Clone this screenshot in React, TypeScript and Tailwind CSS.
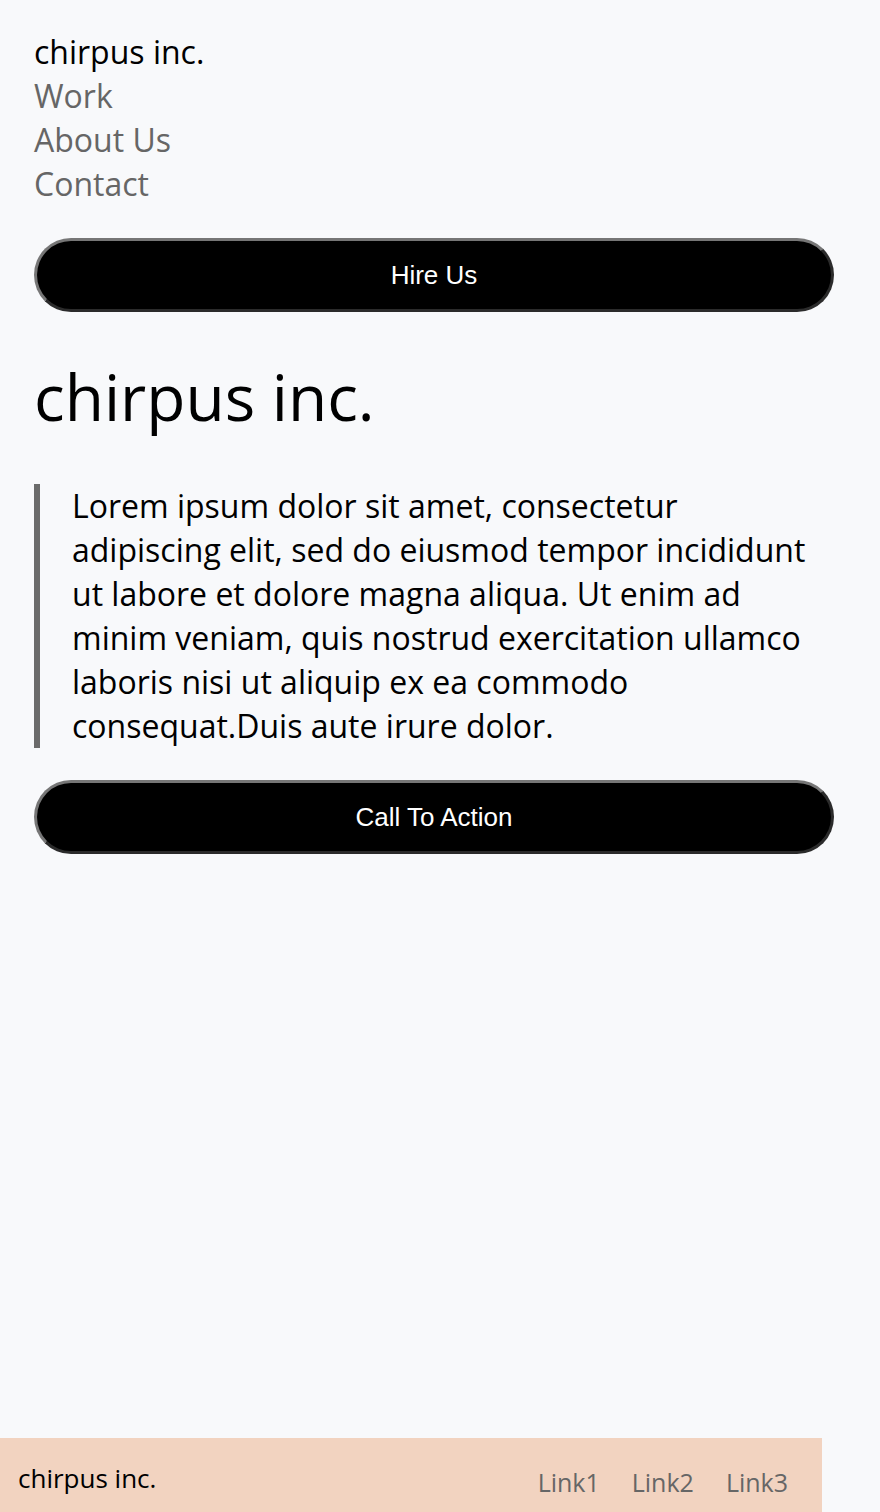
import React from 'react';

const navLinks = ['Work', 'About Us', 'Contact'];
const footerLinks = ['Link1', 'Link2', 'Link3'];

function PillButton({ label }: { label: string }) {
  return (
    <button
      type="button"
      className="w-[800px] h-[74px] rounded-full bg-black text-white text-[26px] font-['Liberation_Sans',Arial,sans-serif] border-[3px] border-t-[#767676] border-l-[#767676] border-r-[#2b2b2b] border-b-[#2b2b2b]"
    >
      {label}
    </button>
  );
}

export default function App() {
  return (
    <div className="min-h-[1512px] flex flex-col bg-[#f8f9fb] font-['Open_Sans','Noto_Sans',sans-serif]">
      <div className="flex-1 px-[34px] pt-[30px]">
        <nav className="text-[32px] leading-[44px]">
          <div className="text-black">chirpus inc.</div>
          {navLinks.map(l => (
            <div key={l} className="text-[#666666]">{l}</div>
          ))}
        </nav>

        <div className="mt-[32px]">
          <PillButton label="Hire Us" />
        </div>

        <h1 className="mt-[41px] text-[64px] leading-[88px] text-black">chirpus inc.</h1>

        <blockquote className="mt-[43px] w-[800px] border-l-[6px] border-[#6b6b6b] pl-[32px] text-[32px] leading-[44px] text-black">
          Lorem ipsum dolor sit amet, consectetur adipiscing elit, sed do eiusmod tempor incididunt ut labore et dolore
          magna aliqua. Ut enim ad minim veniam, quis nostrud exercitation ullamco laboris nisi ut aliquip ex ea commodo
          consequat.Duis aute irure dolor.
        </blockquote>

        <div className="mt-[32px]">
          <PillButton label="Call To Action" />
        </div>
      </div>

      <footer className="w-[822px] h-[74px] bg-[#f2d3c0] flex items-center justify-between pl-[18px] pr-[34px]">
        <div className="text-[26px] text-black pt-[6px]">chirpus inc.</div>
        <div className="flex gap-[32px] text-[25px] text-[#666666] pt-[15px]">
          {footerLinks.map(l => (
            <span key={l}>{l}</span>
          ))}
        </div>
      </footer>
    </div>
  );
}
